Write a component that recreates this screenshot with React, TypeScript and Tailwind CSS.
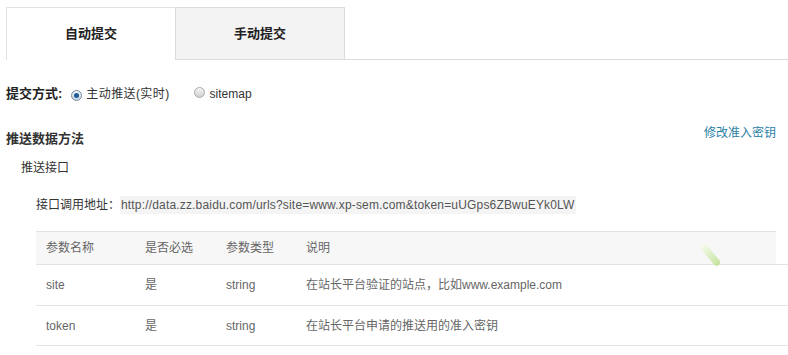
const font = { fontFamily: '"Liberation Sans", "Noto Sans CJK SC", Arial, sans-serif' };

function Radio({ checked }: { checked?: boolean }) {
    return (
        <span
            className={
                checked
                    ? 'inline-flex h-[11px] w-[11px] items-center justify-center rounded-full border border-[#6f8aa3] bg-gradient-to-b from-[#eef3f7] to-[#c9d6e1]'
                    : 'inline-flex h-[11px] w-[11px] items-center justify-center rounded-full border border-[#a9a9a9] bg-gradient-to-b from-[#f4f4f4] to-[#d2d2d2]'
            }
        >
            {checked && <span className="h-[5px] w-[5px] rounded-full bg-[#1f5d96]" />}
        </span>
    );
}

const rows = [
    { name: 'site', req: '是', type: 'string', desc: '在站长平台验证的站点，比如www.example.com' },
    { name: 'token', req: '是', type: 'string', desc: '在站长平台申请的推送用的准入密钥' },
];

export default function App() {
    return (
        <div className="relative h-[355px] w-[788px] overflow-hidden bg-white text-[12px] text-[#333]" style={font}>
            {/* Tabs */}
            <div className="flex pl-[6px] pt-[7px]">
                <div className="flex h-[53px] w-[169px] items-center justify-center border-l border-t border-[#e3e3e3] bg-white text-[13px] font-bold text-[#222]">
                    自动提交
                </div>
                <div className="flex h-[53px] w-[170px] items-center justify-center border border-[#dcdcdc] bg-[#f3f3f3] text-[13px] font-bold text-[#222]">
                    手动提交
                </div>
                <div className="flex-1 border-b border-[#dcdcdc]" />
            </div>

            {/* Submit mode */}
            <div className="mt-[24px] flex h-[20px] items-center pl-[6px]">
                <span className="text-[13px] font-bold text-[#222]">提交方式:</span>
                <span className="ml-[9px]">
                    <Radio checked />
                </span>
                <span className="ml-[4px] tracking-[0.4px] text-[#333]">主动推送(实时)</span>
                <span className="ml-[24px]">
                    <Radio />
                </span>
                <span className="ml-[5px] text-[#333]">sitemap</span>
            </div>

            {/* Section heading */}
            <div className="mt-[20px] flex items-start justify-between pl-[6px] pr-[12px]">
                <div className="mt-[6px] text-[13px] font-bold leading-[18px] text-[#333]">推送数据方法</div>
                <a className="cursor-pointer leading-[18px] text-[#2b7fa6]">修改准入密钥</a>
            </div>

            <div className="mt-[11px] pl-[21px] leading-[18px] text-[#333]">推送接口</div>

            <div className="mt-[19px] flex items-center pl-[36px] leading-[18px] text-[#333]">
                <span>接口调用地址：</span>
                <span className="bg-[#f4f4f4] px-[1px] tracking-[0.17px] text-[#555]">
                    http://data.zz.baidu.com/urls?site=www.xp-sem.com&amp;token=uUGps6ZBwuEYk0LW
                </span>
            </div>

            {/* Params table */}
            <div className="mt-[17px] pl-[36px] text-[#666]">
                <div className="mr-[12px] flex h-[33px] items-center border-t border-[#e3e3e3] bg-[#f7f7f7] pl-[10px]">
                    <span className="w-[99px]">参数名称</span>
                    <span className="w-[81px]">是否必选</span>
                    <span className="w-[80px]">参数类型</span>
                    <span>说明</span>
                </div>
                {rows.map((r) => (
                    <div key={r.name} className="flex h-[41px] items-center border-t border-[#e3e3e3] pl-[10px] last:border-b">
                        <span className="w-[99px]">{r.name}</span>
                        <span className="w-[81px]">{r.req}</span>
                        <span className="w-[80px]">{r.type}</span>
                        <span>{r.desc}</span>
                    </div>
                ))}
            </div>

            {/* faint decorative streak */}
            <div className="pointer-events-none absolute left-[707px] top-[242px] h-[26px] w-[7px] -rotate-[40deg] rounded-full bg-gradient-to-b from-[#f4fbe8] to-[#b9e08a] opacity-80" />
        </div>
    );
}
